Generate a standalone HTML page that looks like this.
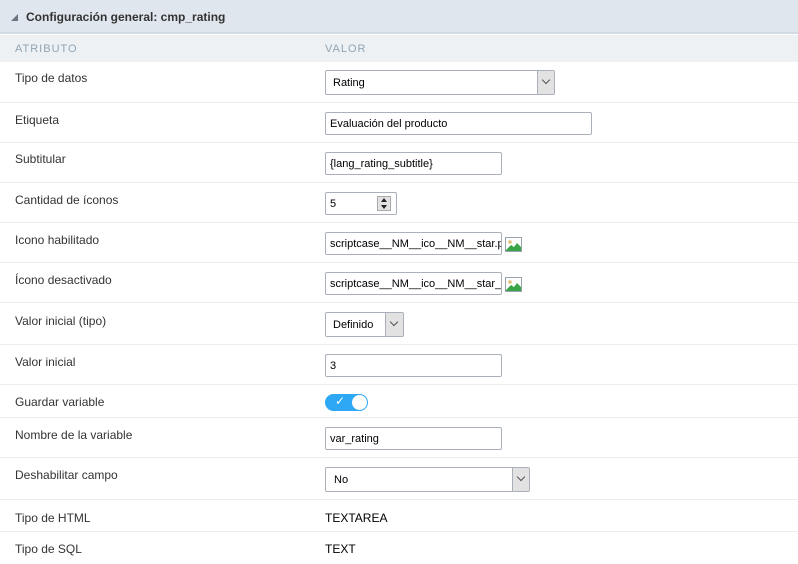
<!DOCTYPE html>
<html><head><meta charset="utf-8"><style>
*{box-sizing:border-box;margin:0;padding:0}
body{width:798px;height:564px;background:#fff;font-family:"Liberation Sans",Arial,sans-serif;font-size:12px;color:#333;position:relative;overflow:hidden}
.hd{position:absolute;left:0;top:0;width:798px;height:34px;background:#e0e6ed;border-bottom:2px solid #d2dae3}
.hd .t{position:absolute;left:26px;top:10px;font-weight:bold;font-size:12px;color:#333}
.hd .tri{position:absolute;left:11px;top:14px;width:0;height:0;border-left:7px solid transparent;border-bottom:7px solid #6a7580}
.ch{position:absolute;left:0;top:35px;width:798px;height:27px;background:#eef1f4;color:#8fa5b5;font-size:11px;letter-spacing:1px}
.ch span{position:absolute;top:8px}
.row{position:absolute;left:0;width:798px;border-bottom:1px solid #ececec}
.lbl{position:absolute;left:15px}
.in{position:absolute;border:1px solid #a9b0b9;border-radius:2px;background:#fff;padding-left:4px;font-size:11px;color:#000;display:flex;align-items:center;white-space:nowrap;overflow:hidden}
.sel .ar{position:absolute;right:0;top:0;bottom:0;width:17px;background:#e2e2e2;border-left:1px solid #a9b0b9}
.sel .ar:after{content:"";position:absolute;left:5px;top:6px;width:5px;height:5px;border-right:1px solid #555;border-bottom:1px solid #555;transform:rotate(45deg)}
.txt{position:absolute;left:325px;font-size:12px;color:#000}
.img{position:absolute;width:17px;height:15px;border:1px solid #9aa3ad;background:#fff;overflow:hidden}
</style></head><body>
<div class="hd"><div class="tri"></div><div class="t">Configuración general: cmp_rating</div></div>
<div class="ch"><span style="left:15px">ATRIBUTO</span><span style="left:325px">VALOR</span></div>

<div class="row" style="top:62px;height:41px"></div>
<div class="row" style="top:103px;height:40px"></div>
<div class="row" style="top:143px;height:40px"></div>
<div class="row" style="top:183px;height:40px"></div>
<div class="row" style="top:223px;height:40px"></div>
<div class="row" style="top:263px;height:40px"></div>
<div class="row" style="top:303px;height:42px"></div>
<div class="row" style="top:345px;height:40px"></div>
<div class="row" style="top:385px;height:33px"></div>
<div class="row" style="top:418px;height:40px"></div>
<div class="row" style="top:458px;height:42px"></div>
<div class="row" style="top:500px;height:32px"></div>

<div class="lbl" style="top:71px">Tipo de datos</div>
<div class="lbl" style="top:113px">Etiqueta</div>
<div class="lbl" style="top:152px">Subtitular</div>
<div class="lbl" style="top:193px">Cantidad de íconos</div>
<div class="lbl" style="top:233px">Icono habilitado</div>
<div class="lbl" style="top:273px">Ícono desactivado</div>
<div class="lbl" style="top:314px">Valor inicial (tipo)</div>
<div class="lbl" style="top:355px">Valor inicial</div>
<div class="lbl" style="top:395px">Guardar variable</div>
<div class="lbl" style="top:428px">Nombre de la variable</div>
<div class="lbl" style="top:468px">Deshabilitar campo</div>
<div class="lbl" style="top:511px">Tipo de HTML</div>
<div class="lbl" style="top:542px">Tipo de SQL</div>

<div class="in sel" style="left:325px;top:70px;width:230px;height:25px;padding-left:7px">Rating<div class="ar"></div></div>
<div class="in" style="left:325px;top:112px;width:267px;height:23px">Evaluación del producto</div>
<div class="in" style="left:325px;top:152px;width:177px;height:23px">{lang_rating_subtitle}</div>
<div class="in" style="left:325px;top:192px;width:72px;height:23px">5
 <div style="position:absolute;left:51px;top:3px;width:14px;height:15px;background:#e2e2e2;border:1px solid #aaa">
  <div style="position:absolute;left:3px;top:1px;border-left:3px solid transparent;border-right:3px solid transparent;border-bottom:4px solid #222"></div>
  <div style="position:absolute;left:3px;top:8px;border-left:3px solid transparent;border-right:3px solid transparent;border-top:4px solid #222"></div>
 </div></div>
<div class="in" style="left:325px;top:232px;width:177px;height:23px">scriptcase__NM__ico__NM__star.p</div>
<div class="in" style="left:325px;top:272px;width:177px;height:23px">scriptcase__NM__ico__NM__star_c</div>
<div class="img" style="left:505px;top:237px"><svg width="15" height="13"><circle cx="4" cy="4" r="1.8" fill="#e0c070"/><path d="M0 12 L5 7 L8 9 L11 5 L15 9 L15 13 L0 13Z" fill="#3aa548"/></svg></div>
<div class="img" style="left:505px;top:277px"><svg width="15" height="13"><circle cx="4" cy="4" r="1.8" fill="#e0c070"/><path d="M0 12 L5 7 L8 9 L11 5 L15 9 L15 13 L0 13Z" fill="#3aa548"/></svg></div>
<div class="in sel" style="left:325px;top:312px;width:79px;height:25px;padding-left:7px">Definido<div class="ar" style="width:18px"></div></div>
<div class="in" style="left:325px;top:354px;width:177px;height:23px">3</div>
<div style="position:absolute;left:325px;top:394px;width:43px;height:17px;border-radius:9px;background:#2ea8f5">
 <span style="position:absolute;left:10px;top:0px;color:#fff;font-size:12px">✓</span>
 <div style="position:absolute;right:1px;top:1px;width:15px;height:15px;border-radius:50%;background:#fff"></div></div>
<div class="in" style="left:325px;top:427px;width:177px;height:23px">var_rating</div>
<div class="in sel" style="left:325px;top:467px;width:205px;height:25px;padding-left:8px">No<div class="ar"></div></div>
<div class="txt" style="top:511px">TEXTAREA</div>
<div class="txt" style="top:542px">TEXT</div>
</body></html>
